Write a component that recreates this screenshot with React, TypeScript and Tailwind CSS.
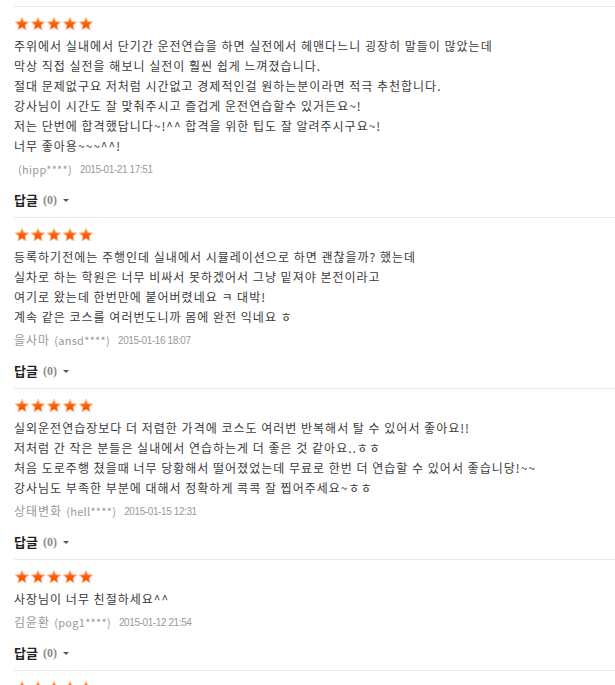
import React from 'react';

type Review = {
  lines: string[];
  name: string;
  userId: string;
  date: string;
  replies: number;
};

const reviews: Review[] = [
  {
    lines: [
      '주위에서 실내에서 단기간 운전연습을 하면 실전에서 헤맨다느니 굉장히 말들이 많았는데',
      '막상 직접 실전을 해보니 실전이 훨씬 쉽게 느껴졌습니다.',
      '절대 문제없구요 저처럼 시간없고 경제적인걸 원하는분이라면 적극 추천합니다.',
      '강사님이 시간도 잘 맞춰주시고 즐겁게 운전연습할수 있거든요~!',
      '저는 단번에 합격했답니다~!^^ 합격을 위한 팁도 잘 알려주시구요~!',
      '너무 좋아용~~~^^!',
    ],
    name: '',
    userId: '(hipp****)',
    date: '2015-01-21 17:51',
    replies: 0,
  },
  {
    lines: [
      '등록하기전에는 주행인데 실내에서 시뮬레이션으로 하면 괜찮을까? 했는데',
      '실차로 하는 학원은 너무 비싸서 못하겠어서 그냥 밑져야 본전이라고',
      '여기로 왔는데 한번만에 붙어버렸네요 ㅋ 대박!',
      '계속 같은 코스를 여러번도니까 몸에 완전 익네요 ㅎ',
    ],
    name: '을사마',
    userId: '(ansd****)',
    date: '2015-01-16 18:07',
    replies: 0,
  },
  {
    lines: [
      '실외운전연습장보다 더 저렴한 가격에 코스도 여러번 반복해서 탈 수 있어서 좋아요!!',
      '저처럼 간 작은 분들은 실내에서 연습하는게 더 좋은 것 같아요..ㅎㅎ',
      '처음 도로주행 쳤을때 너무 당황해서 떨어졌었는데 무료로 한번 더 연습할 수 있어서 좋습니당!~~',
      '강사님도 부족한 부분에 대해서 정확하게 콕콕 잘 찝어주세요~ㅎㅎ',
    ],
    name: '상태변화',
    userId: '(hell****)',
    date: '2015-01-15 12:31',
    replies: 0,
  },
  {
    lines: ['사장님이 너무 친절하세요^^'],
    name: '김윤환',
    userId: '(pog1****)',
    date: '2015-01-12 21:54',
    replies: 0,
  },
];

function Star() {
  return (
    <svg width="16" height="16" viewBox="0 0 16 16">
      <defs>
        <linearGradient id="starFill" x1="0" y1="0" x2="0" y2="1">
          <stop offset="0" stopColor="#ff8a3a" />
          <stop offset="0.55" stopColor="#ff5a00" />
          <stop offset="1" stopColor="#f24a00" />
        </linearGradient>
      </defs>
      <path
        d="M8 1.2 L9.9 5.6 L14.7 6 L11.1 9.2 L12.2 13.9 L8 11.4 L3.8 13.9 L4.9 9.2 L1.3 6 L6.1 5.6 Z"
        fill="url(#starFill)"
        stroke="#ffc49a"
        strokeWidth="1"
        strokeLinejoin="round"
      />
    </svg>
  );
}

function Stars() {
  return (
    <div className="flex h-[16px]">
      {[0, 1, 2, 3, 4].map((i) => (
        <Star key={i} />
      ))}
    </div>
  );
}

function ReviewItem({ review }: { review: Review }) {
  return (
    <div className="border-t border-[#ebebeb] pt-[9px] pb-[8px]">
      <Stars />
      <div className="mt-[4px] text-[12px] leading-[20px] tracking-[1px] text-[#3a3a3a]">
        {review.lines.map((line, i) => (
          <p key={i}>{line}</p>
        ))}
      </div>
      <div className="mt-[5px] flex h-[16px] items-center text-[#999]">
        <span className="text-[12px] tracking-[1px]">{review.name}</span>
        <span className="ml-[4px] text-[11px] tracking-[0.3px]">{review.userId}</span>
        <span className="ml-[8px] font-['Liberation_Sans',sans-serif] text-[10px] tracking-[-0.4px]">
          {review.date}
        </span>
      </div>
      <div className="mt-[14px] flex h-[18px] items-center">
        <span className="text-[13px] font-bold text-[#222]">답글</span>
        <span className="ml-[5px] font-['Liberation_Serif',serif] text-[12px] font-bold text-[#8a8a8a]">
          ({review.replies})
        </span>
        <span className="ml-[6px] inline-block h-0 w-0 border-x-[3px] border-t-[3px] border-x-transparent border-t-[#555]" />
      </div>
    </div>
  );
}

export default function App() {
  return (
    <div className="h-screen overflow-hidden bg-white pt-[6px] pl-[14px] font-['Noto_Sans_CJK_KR',sans-serif]">
      {reviews.map((r, i) => (
        <ReviewItem key={i} review={r} />
      ))}
      <div className="border-t border-[#ebebeb] pt-[9px]">
        <Stars />
      </div>
    </div>
  );
}
